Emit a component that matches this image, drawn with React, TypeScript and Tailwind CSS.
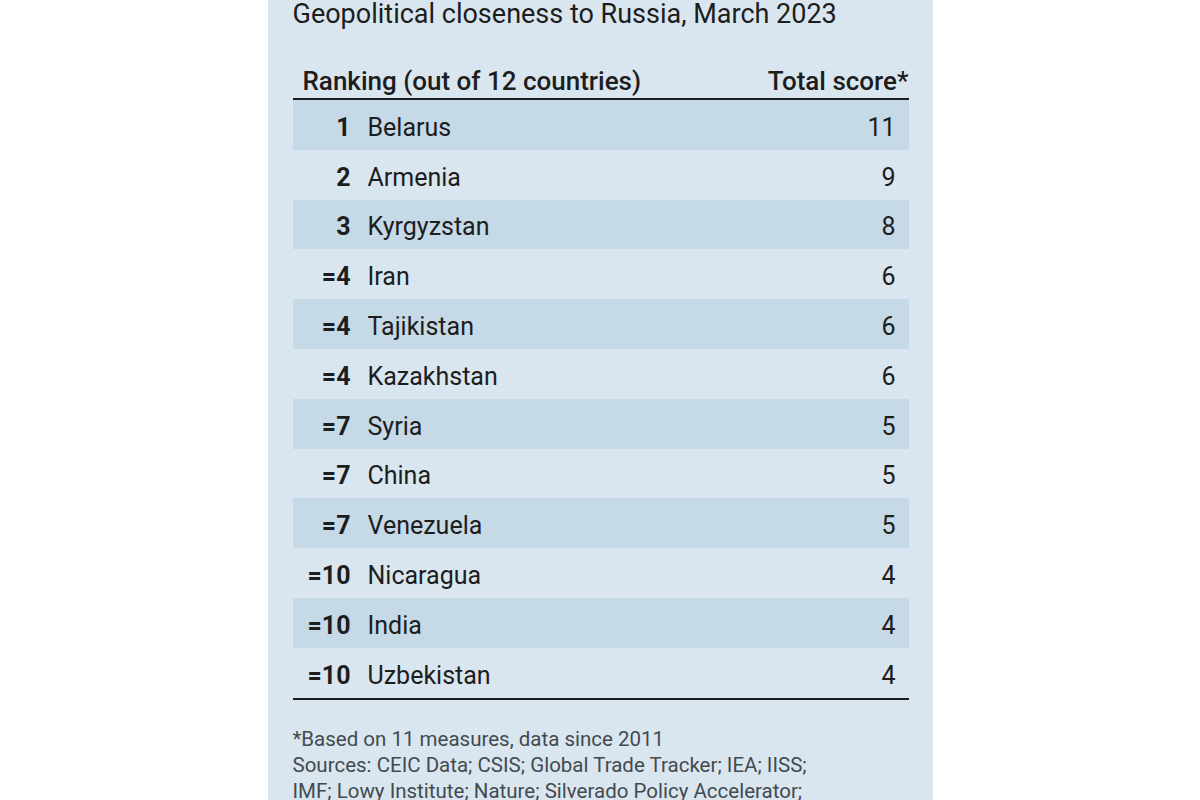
const rows: [string, string, number][] = [
  ["1", "Belarus", 11],
  ["2", "Armenia", 9],
  ["3", "Kyrgyzstan", 8],
  ["=4", "Iran", 6],
  ["=4", "Tajikistan", 6],
  ["=4", "Kazakhstan", 6],
  ["=7", "Syria", 5],
  ["=7", "China", 5],
  ["=7", "Venezuela", 5],
  ["=10", "Nicaragua", 4],
  ["=10", "India", 4],
  ["=10", "Uzbekistan", 4],
];

export default function App() {
  return (
    <div className="flex h-[800px] w-[1200px] justify-center overflow-hidden bg-white font-['Roboto',sans-serif] text-[#1d1d1d]">
      <div className="flex h-[800px] w-[665px] flex-col bg-[#d9e6ef] pl-[25px] pr-[24px]">
        <h1 className="text-[27px] leading-[28px] font-normal">
          Geopolitical closeness to Russia, March 2023
        </h1>

        {/* en-tête du tableau */}
        <div className="mt-[38px] flex items-end justify-between border-b-2 border-[#1d1d1d] pb-[2px] pl-[10px] text-[26px] leading-[30px] font-medium">
          <span>Ranking (out of 12 countries)</span>
          <span>Total score*</span>
        </div>

        <div className="flex flex-col">
          {rows.map(([rank, country, score], i) => (
            <div
              key={country}
              className={
                "flex h-[49.8px] items-center pt-[6px] text-[25px] leading-[30px] " +
                (i % 2 === 0 ? "bg-[#c5d9e6]" : "")
              }
            >
              <span className="w-[58px] text-right font-bold">{rank}</span>
              <span className="ml-[17px] flex-1">{country}</span>
              <span className="pr-[13px]">{score}</span>
            </div>
          ))}
        </div>
        <div className="border-b-2 border-[#1d1d1d]" />

        <div className="mt-[26px] text-[20.5px] leading-[26px] text-[#434a50]">
          <p>*Based on 11 measures, data since 2011</p>
          <p>Sources: CEIC Data; CSIS; Global Trade Tracker; IEA; IISS;</p>
          <p>IMF; Lowy Institute; Nature; Silverado Policy Accelerator;</p>
        </div>
      </div>
    </div>
  );
}
